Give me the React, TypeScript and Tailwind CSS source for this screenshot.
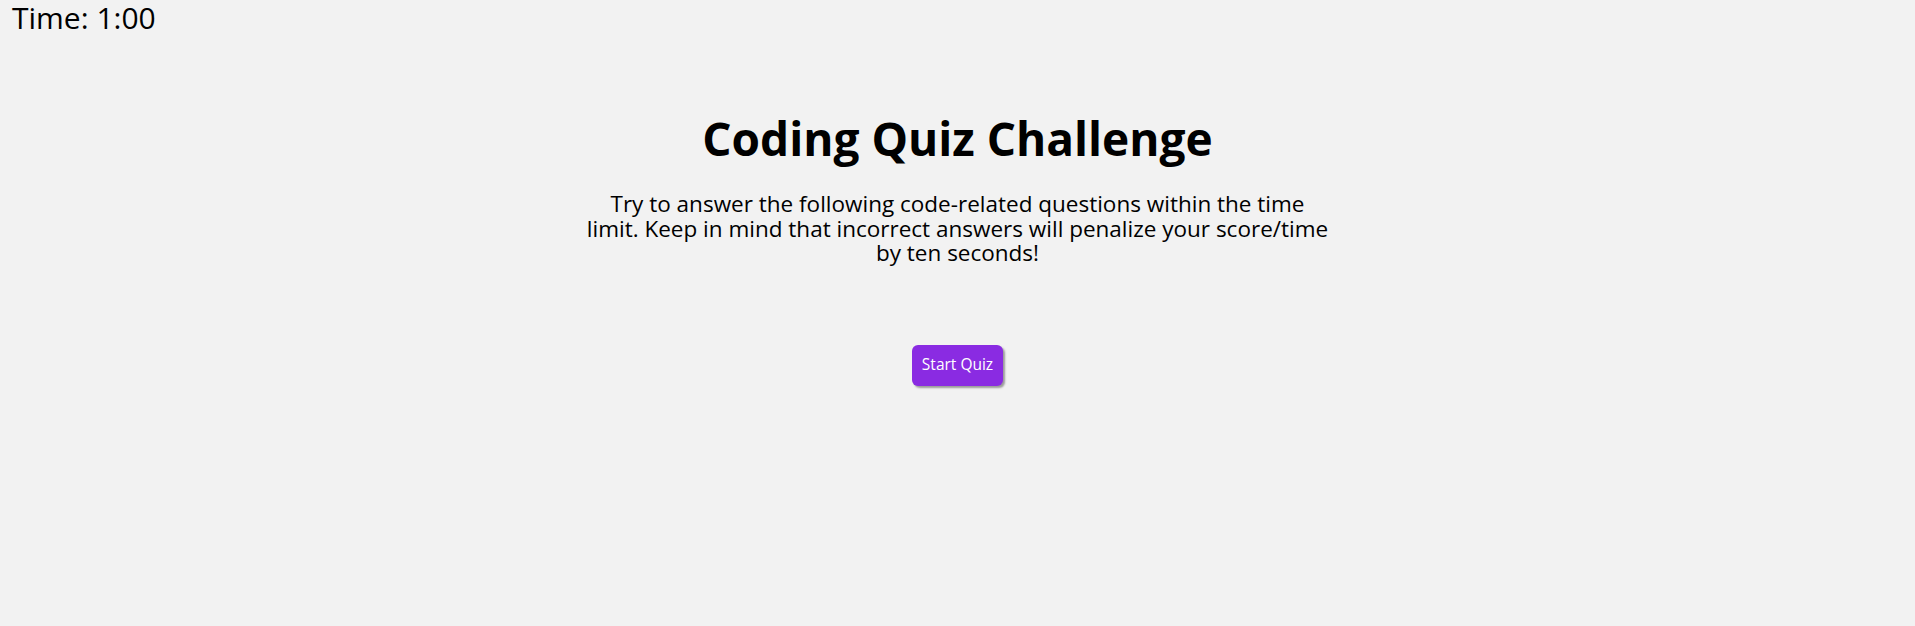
export default function App() {
  return (
    <div className="min-h-[626px] w-full bg-[#f2f2f2] text-black" style={{ fontFamily: '"Open Sans", "Noto Sans", sans-serif' }}>
      <header className="px-3 pt-0">
        <p className="text-[30px] leading-[36px]">Time: 1:00</p>
      </header>

      <main className="flex flex-col items-center text-center">
        <h1 className="mt-[72px] text-[46px] font-bold leading-[60px]">Coding Quiz Challenge</h1>
        <p className="mt-[24px] w-[748px] text-[22.5px] leading-[24.5px]">
          Try to answer the following code-related questions within the time limit. Keep in mind that incorrect
          answers will penalize your score/time by ten seconds!
        </p>
        <button className="mt-[79px] h-[41px] rounded-[6px] bg-[#8a2be2] px-[10px] text-[15.5px] text-white shadow-[2px_2px_2px_#9a9a9a]">
          Start Quiz
        </button>
      </main>
    </div>
  );
}
